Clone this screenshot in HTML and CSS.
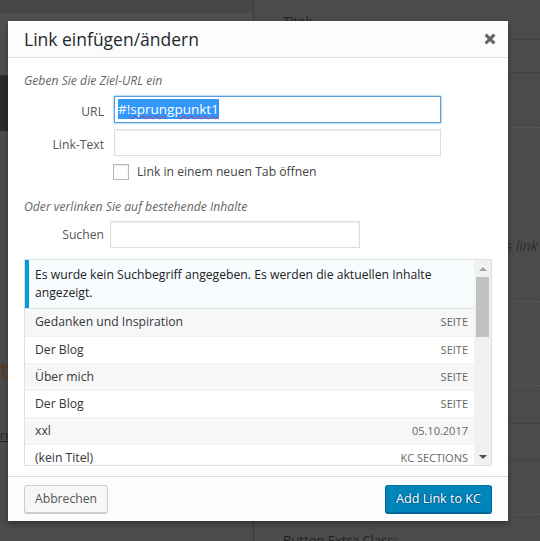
FILE: index.html
```html
<!DOCTYPE html>
<html lang="de">
<head>
    <meta charset="UTF-8">
    <meta name="viewport" content="width=device-width, initial-scale=1.0">
    <title>Link einfügen/ändern</title>
    <link rel="stylesheet" href="styles.css">
</head>
<body>
    <!-- dimmed admin page behind the dialog -->
    <div class="page">
        <div class="page-left">
            <div class="band-top"></div>
            <div class="band-mid"></div>
            <div class="band-menu"></div>
            <div class="band-space"></div>
            <div class="page-heading">t</div>
            <div class="band-space2"></div>
            <div class="page-link">re</div>
        </div>
        <div class="page-right">
            <div class="pr-title">Titel:</div>
            <div class="pr-line pr-l1"></div>
            <div class="pr-line pr-l2"></div>
            <div class="pr-dots pr-d1"></div>
            <div class="pr-dots pr-note">s link</div>
            <div class="pr-dots pr-d3"></div>
            <div class="pr-line pr-l3"></div>
            <div class="pr-line pr-l4"></div>
            <div class="pr-dots pr-d4"></div>
            <div class="pr-title pr-bottom">Button Extra Class:</div>
        </div>
    </div>

    <div class="link-modal">
        <div class="modal-head">
            <h1>Link einfügen/ändern</h1>
            <button class="close-btn" aria-label="Schließen">
                <svg width="12" height="12" viewBox="0 0 12 12"><path d="M1.6 1.6L10.4 10.4M10.4 1.6L1.6 10.4" stroke="#666" stroke-width="3"/></svg>
            </button>
        </div>

        <div class="modal-body">
            <p class="howto first">Geben Sie die Ziel-URL ein</p>
            <div class="field-row">
                <span class="field-label">URL</span>
                <div class="text-input focused"><span class="selected">#!<span class="misspelled">sprungpunkt1</span></span></div>
            </div>
            <div class="field-row">
                <span class="field-label">Link-Text</span>
                <div class="text-input"></div>
            </div>
            <div class="field-row target-row">
                <span class="field-label"></span>
                <span class="checkbox"></span>
                <span class="target-text">Link in einem neuen Tab öffnen</span>
            </div>

            <p class="howto second">Oder verlinken Sie auf bestehende Inhalte</p>
            <div class="field-row search-row">
                <span class="field-label">Suchen</span>
                <div class="text-input search-input"></div>
            </div>

            <div class="query-results">
                <ul class="results-list">
                    <li class="query-notice"><span>Es wurde kein Suchbegriff angegeben. Es werden die aktuellen Inhalte angezeigt.</span></li>
                    <li class="alt"><span class="item-title">Gedanken und Inspiration</span><span class="item-info">Seite</span></li>
                    <li><span class="item-title">Der Blog</span><span class="item-info">Seite</span></li>
                    <li class="alt"><span class="item-title">Über mich</span><span class="item-info">Seite</span></li>
                    <li><span class="item-title">Der Blog</span><span class="item-info">Seite</span></li>
                    <li class="alt"><span class="item-title">xxl</span><span class="item-info">05.10.2017</span></li>
                    <li><span class="item-title">(kein Titel)</span><span class="item-info">KC Sections</span></li>
                </ul>
                <div class="scrollbar">
                    <span class="sb-arrow"><span class="tri-up"></span></span>
                    <span class="sb-thumb"></span>
                    <span class="sb-track"></span>
                    <span class="sb-arrow"><span class="tri-down"></span></span>
                </div>
            </div>
        </div>

        <div class="modal-foot">
            <button class="btn">Abbrechen</button>
            <button class="btn btn-primary">Add Link to KC</button>
        </div>
    </div>
</body>
</html>
```

FILE: styles.css
```css
body {
    margin: 0;
    width: 540px;
    height: 541px;
    overflow: hidden;
    position: relative;
    background: #4b4b4b;
    font-family: "Open Sans", "Noto Sans", sans-serif;
    font-size: 12.2px;
    line-height: 18px;
}

/* background page */
.page {
    display: flex;
    height: 541px;
}
.page-left {
    width: 253px;
    border-right: 1px solid #3b3b3b;
    display: flex;
    flex-direction: column;
}
.band-top {
    height: 13px;
    background: #474747;
}
.band-mid {
    height: 62px;
    background: #4e4e4e;
}
.band-menu {
    height: 56px;
    background: #2a2a2a;
}
.band-space {
    height: 224px;
}
.page-heading {
    font-size: 24px;
    line-height: 30px;
    color: #5a3a22;
}
.band-space2 {
    height: 42px;
}
.page-link {
    color: #262626;
    text-decoration: underline;
}
.page-right {
    flex: 1;
    display: flex;
    flex-direction: column;
}
.page-right > div {
    flex-shrink: 0;
}
.pr-title {
    padding: 12px 0 0 29px;
    color: #1f1f1f;
    height: 20px;
    font-size: 13px;
    white-space: nowrap;
}
.pr-bottom {
    padding-top: 16px;
}
.pr-line {
    border-bottom: 1px solid #404040;
}
.pr-l1 { height: 7px; }
.pr-l2 { height: 32px; }
.pr-l3 { height: 37px; }
.pr-l4 { height: 35px; }
.pr-dots {
    border-bottom: 1px dotted #5e5e5e;
}
.pr-d1 { height: 54px; }
.pr-d3 { height: 83px; }
.pr-d4 { height: 54px; }
.pr-note {
    height: 64px;
    padding: 109px 0 0 252px;
    font-style: italic;
    font-size: 14px;
    color: #2e2e2e;
    white-space: nowrap;
}

/* dialog */
.link-modal {
    position: absolute;
    left: 8px;
    top: 21px;
    width: 500px;
    height: 500px;
    background: #fff;
    box-shadow: 0 3px 6px rgba(0, 0, 0, 0.3);
    display: flex;
    flex-direction: column;
}
.modal-head {
    height: 36px;
    background: #fcfcfc;
    border-bottom: 1px solid #ddd;
    display: flex;
    align-items: center;
    justify-content: space-between;
    padding-left: 16px;
}
.modal-head h1 {
    margin: 0;
    font-size: 17.5px;
    font-weight: 400;
    line-height: 36px;
    color: #23282d;
}
.close-btn {
    width: 36px;
    height: 36px;
    padding: 0;
    border: none;
    background: none;
    display: flex;
    align-items: center;
    justify-content: center;
}
.modal-body {
    flex: 1;
    padding: 0 16px;
}
.howto {
    margin: 0;
    color: #666;
    font-style: italic;
    line-height: 18px;
}
.howto.first {
    margin-top: 14px;
    margin-bottom: 6px;
}
.howto.second {
    margin-top: 17px;
    margin-bottom: 5px;
}
.field-row {
    display: flex;
    align-items: center;
    margin-bottom: 6px;
    color: #555;
}
.field-label {
    width: 80px;
    padding: 5px 5px 0 0;
    text-align: right;
    flex-shrink: 0;
}
.text-input {
    width: 327px;
    height: 27px;
    margin-left: 5px;
    box-sizing: border-box;
    border: 1px solid #ddd;
    box-shadow: inset 0 1px 2px rgba(0, 0, 0, 0.07);
    padding: 2px 3px;
    font-size: 13.5px;
    line-height: 20px;
}
.text-input.focused {
    border-color: #5b9dd9;
    box-shadow: 0 0 2px rgba(30, 140, 190, 0.8);
}
.selected {
    background: #3297fd;
    color: #fff;
    display: inline-block;
}
.misspelled {
    text-decoration: underline wavy #c8306e;
    text-decoration-thickness: 1px;
    text-underline-offset: 1px;
}
.target-row {
    margin-top: 2px;
    margin-bottom: 0;
    color: #444;
}
.target-row .field-label {
    padding-top: 0;
}
.checkbox {
    width: 16px;
    height: 16px;
    margin-left: 4px;
    box-sizing: border-box;
    border: 1px solid #b4b9be;
    background: #fff;
    box-shadow: inset 0 1px 2px rgba(0, 0, 0, 0.1);
    flex-shrink: 0;
}
.target-text {
    margin-left: 8px;
    padding-top: 1px;
}
.search-row .field-label {
    padding-top: 0;
}
.search-input {
    width: 250px;
    margin-left: 1px;
}

/* results */
.query-results {
    margin-top: 11px;
    height: 207px;
    box-sizing: border-box;
    border: 1px solid #dfdfdf;
    display: flex;
}
.results-list {
    flex: 1;
    margin: 0;
    padding: 0;
    list-style: none;
    overflow: hidden;
}
.results-list li {
    display: flex;
    align-items: center;
    justify-content: space-between;
    padding: 4px 6px 4px 10px;
    line-height: 18.2px;
    border-bottom: 1px solid #f1f1f1;
    color: #32373c;
}
.results-list li.alt {
    background: #f7f7f7;
}
.results-list li.query-notice {
    padding: 0;
    display: block;
    background: #f7fcfe;
    border-bottom: 1px solid #dfdfdf;
    color: #222;
}
.query-notice span {
    display: block;
    padding: 6px;
    border-left: 4px solid #00a0d2;
}
.item-info {
    font-size: 11px;
    text-transform: uppercase;
    color: #666;
}
.scrollbar {
    width: 17px;
    background: #f1f1f1;
    display: flex;
    flex-direction: column;
    align-items: center;
}
.sb-arrow {
    height: 17px;
    width: 17px;
    display: flex;
    align-items: center;
    justify-content: center;
}
.tri-up {
    border-left: 4px solid transparent;
    border-right: 4px solid transparent;
    border-bottom: 4px solid #a3a3a3;
}
.tri-down {
    border-left: 4px solid transparent;
    border-right: 4px solid transparent;
    border-top: 4px solid #505050;
}
.sb-thumb {
    width: 13px;
    height: 60px;
    background: #c1c1c1;
}
.sb-track {
    flex: 1;
}

/* footer */
.modal-foot {
    height: 44px;
    box-sizing: content-box;
    border-top: 1px solid #ddd;
    background: #fcfcfc;
    padding: 0 16px;
    display: flex;
    align-items: center;
    justify-content: space-between;
}
.btn {
    height: 28px;
    padding: 0 10px 1px;
    font-family: inherit;
    font-size: 12.2px;
    line-height: 26px;
    color: #555;
    background: #f7f7f7;
    border: 1px solid #ccc;
    border-radius: 3px;
    box-shadow: 0 1px 0 #ccc;
}
.btn-primary {
    font-size: 12.6px;
    color: #fff;
    background: #0085ba;
    border-color: #0073aa #006799 #006799;
    box-shadow: 0 1px 0 #006799;
    text-shadow: 0 -1px 1px #006799, 1px 0 1px #006799, 0 1px 1px #006799, -1px 0 1px #006799;
}
```
